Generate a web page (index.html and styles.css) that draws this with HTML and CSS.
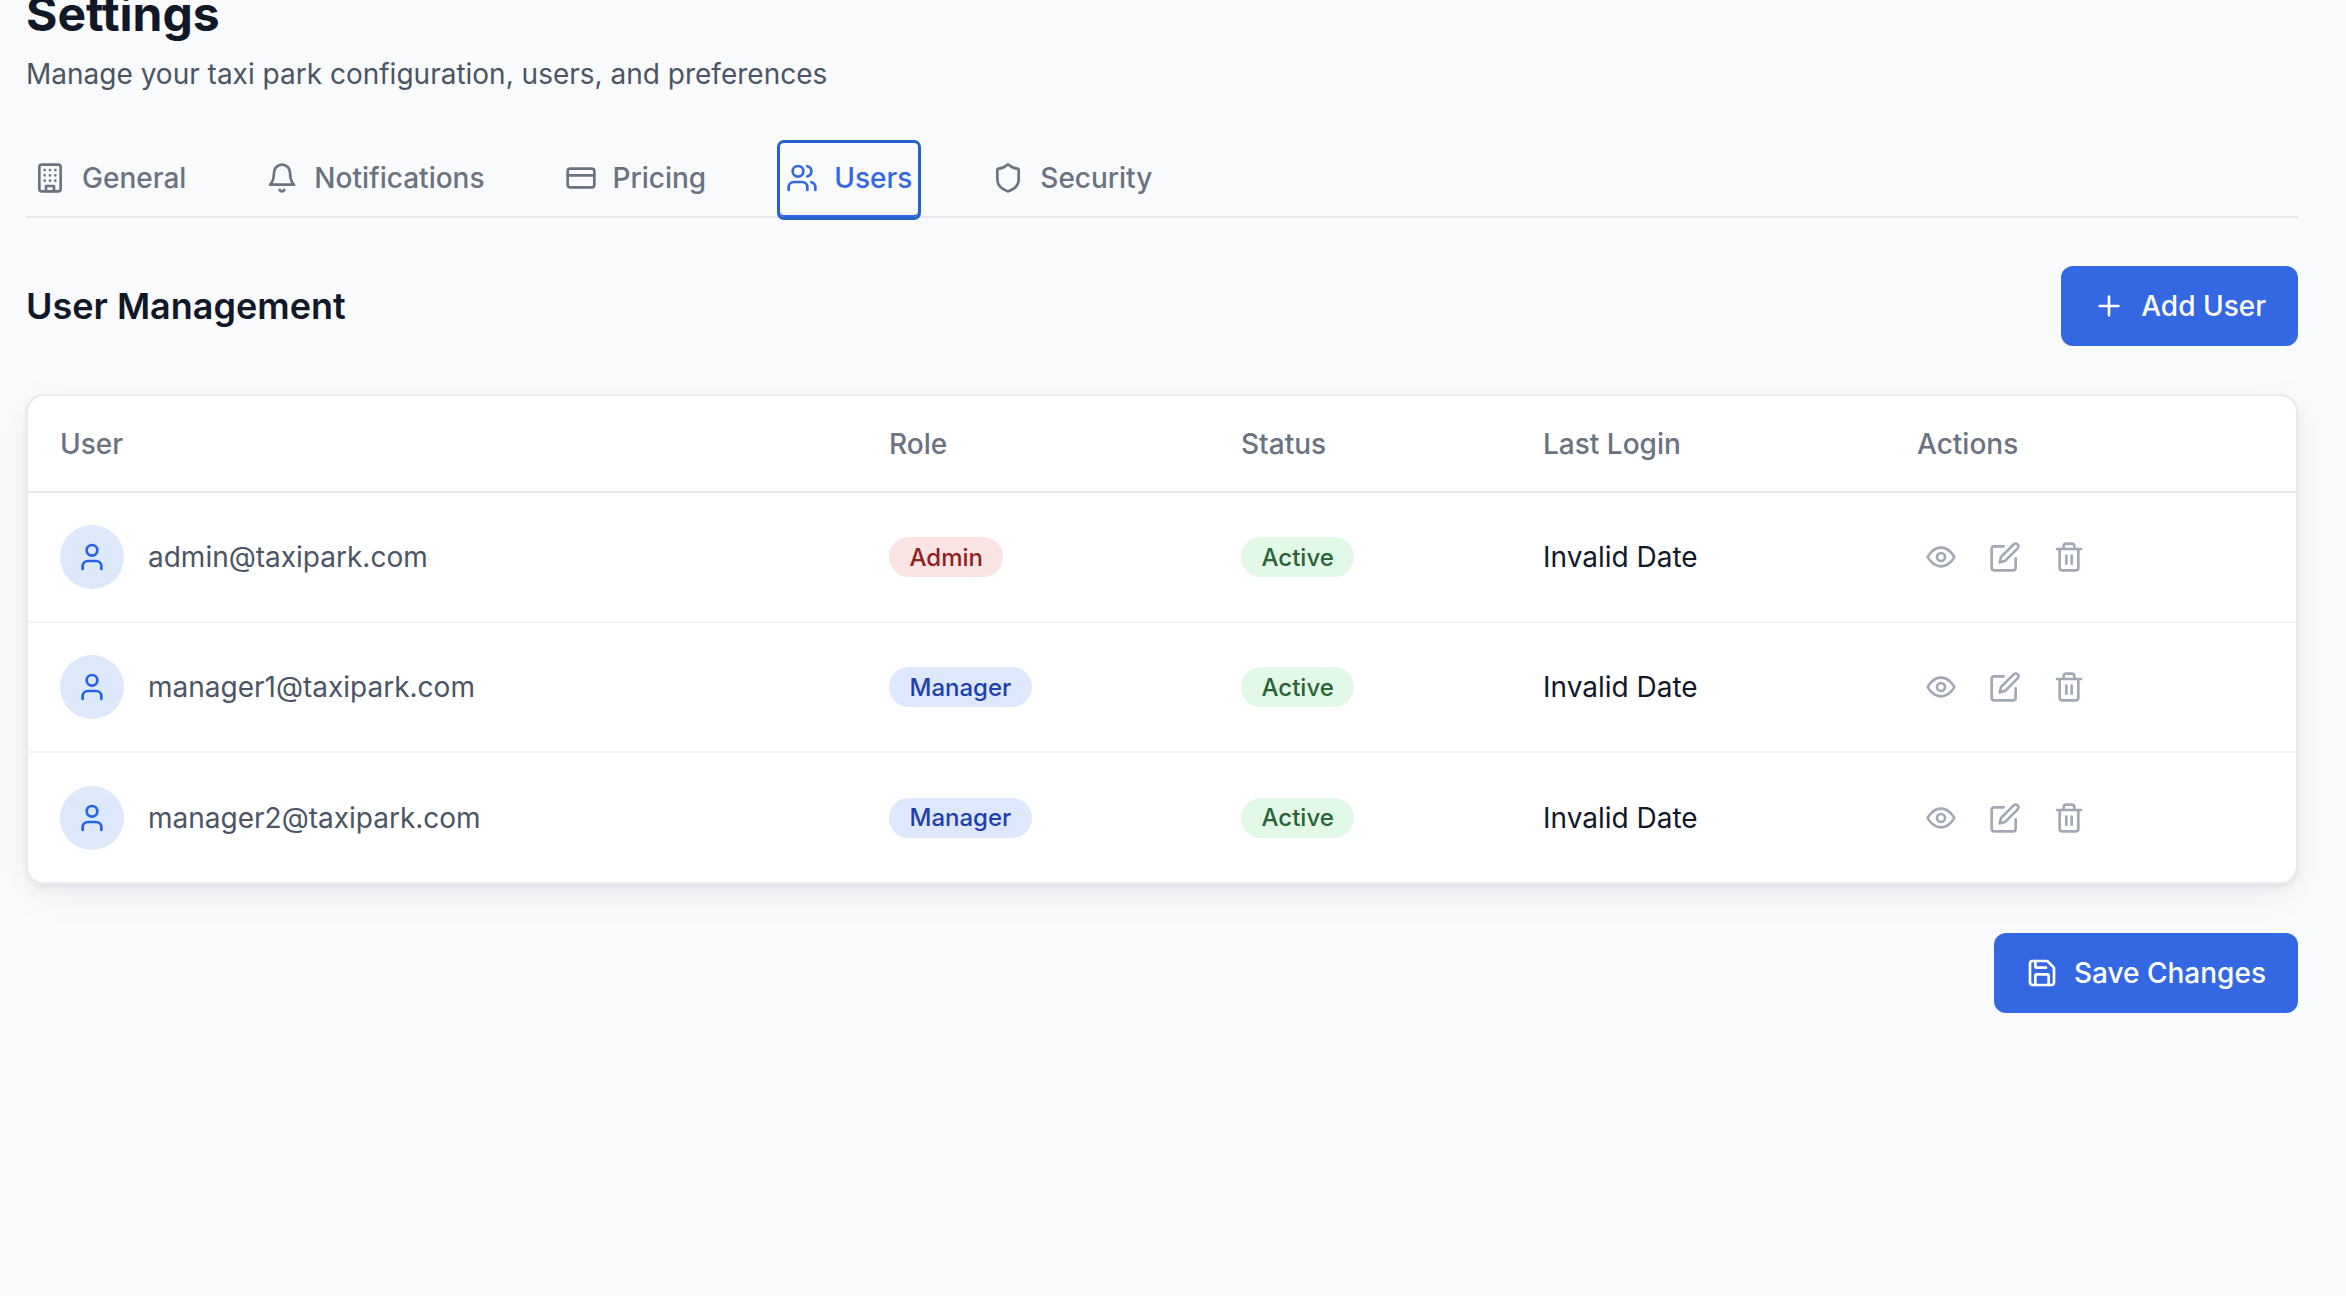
FILE: index.html
```html
<!DOCTYPE html>
<html lang="en">
<head>
<meta charset="utf-8">
<title>Settings</title>
<link rel="stylesheet" href="styles.css">
</head>
<body>
<main class="page">
  <header class="page-head">
    <h1 class="title">Settings</h1>
    <p class="subtitle">Manage your taxi park configuration, users, and preferences</p>
  </header>
  <nav class="tabs">
    <a class="tab"><svg class="icon" viewBox="0 0 24 24"><rect x="4" y="2" width="16" height="20" rx="2"/><path d="M9 22v-4h6v4M8 6h.01M16 6h.01M12 6h.01M12 10h.01M12 14h.01M16 10h.01M16 14h.01M8 10h.01M8 14h.01"/></svg>General</a>
    <a class="tab"><svg class="icon" viewBox="0 0 24 24"><path d="M6 8a6 6 0 0 1 12 0c0 7 3 9 3 9H3s3-2 3-9"/><path d="M10.3 21a1.94 1.94 0 0 0 3.4 0"/></svg>Notifications</a>
    <a class="tab"><svg class="icon" viewBox="0 0 24 24"><rect x="2" y="5" width="20" height="14" rx="2"/><path d="M2 10h20"/></svg>Pricing</a>
    <a class="tab tab-active"><svg class="icon" viewBox="0 0 24 24"><path d="M16 21v-2a4 4 0 0 0-4-4H6a4 4 0 0 0-4 4v2"/><circle cx="9" cy="7" r="4"/><path d="M22 21v-2a4 4 0 0 0-3-3.87M16 3.13a4 4 0 0 1 0 7.75"/></svg>Users</a>
    <a class="tab"><svg class="icon" viewBox="0 0 24 24"><path d="M20 13c0 5-3.5 7.5-7.66 8.95a1 1 0 0 1-.67-.01C7.5 20.5 4 18 4 13V6a1 1 0 0 1 1-1c2 0 4.5-1.2 6.24-2.72a1.17 1.17 0 0 1 1.52 0C14.51 3.81 17 5 19 5a1 1 0 0 1 1 1z"/></svg>Security</a>
  </nav>

  <section class="section-head">
    <h2 class="section-title">User Management</h2>
    <button class="btn"><svg class="icon" viewBox="0 0 24 24"><path d="M5 12h14M12 5v14"/></svg>Add User</button>
  </section>

  <div class="card">
    <table class="users">
      <colgroup>
        <col class="col-user"><col class="col-role"><col class="col-status"><col class="col-login"><col>
      </colgroup>
      <thead>
        <tr><th>User</th><th>Role</th><th>Status</th><th>Last Login</th><th>Actions</th></tr>
      </thead>
      <tbody>
        <tr>
          <td><div class="who"><span class="avatar"><svg class="icon" viewBox="0 0 24 24"><path d="M19 21v-2a4 4 0 0 0-4-4H9a4 4 0 0 0-4 4v2"/><circle cx="12" cy="7" r="4"/></svg></span>admin@taxipark.com</div></td>
          <td><span class="badge badge-admin">Admin</span></td>
          <td><span class="badge badge-active">Active</span></td>
          <td class="login">Invalid Date</td>
          <td><div class="actions">
            <button class="act"><svg class="icon" viewBox="0 0 24 24"><path d="M2 12s3.5-7 10-7 10 7 10 7-3.5 7-10 7-10-7-10-7"/><circle cx="12" cy="12" r="3"/></svg></button>
            <button class="act"><svg class="icon" viewBox="0 0 24 24"><path d="M11 4H4a2 2 0 0 0-2 2v14a2 2 0 0 0 2 2h14a2 2 0 0 0 2-2v-7"/><path d="M18.5 2.5a2.12 2.12 0 0 1 3 3L12 15l-4 1 1-4z"/></svg></button>
            <button class="act"><svg class="icon" viewBox="0 0 24 24"><path d="M3 6h18M19 6v14a2 2 0 0 1-2 2H7a2 2 0 0 1-2-2V6M8 6V4a2 2 0 0 1 2-2h4a2 2 0 0 1 2 2v2M10 11v6M14 11v6"/></svg></button>
          </div></td>
        </tr>
        <tr>
          <td><div class="who"><span class="avatar"><svg class="icon" viewBox="0 0 24 24"><path d="M19 21v-2a4 4 0 0 0-4-4H9a4 4 0 0 0-4 4v2"/><circle cx="12" cy="7" r="4"/></svg></span>manager1@taxipark.com</div></td>
          <td><span class="badge badge-manager">Manager</span></td>
          <td><span class="badge badge-active">Active</span></td>
          <td class="login">Invalid Date</td>
          <td><div class="actions">
            <button class="act"><svg class="icon" viewBox="0 0 24 24"><path d="M2 12s3.5-7 10-7 10 7 10 7-3.5 7-10 7-10-7-10-7"/><circle cx="12" cy="12" r="3"/></svg></button>
            <button class="act"><svg class="icon" viewBox="0 0 24 24"><path d="M11 4H4a2 2 0 0 0-2 2v14a2 2 0 0 0 2 2h14a2 2 0 0 0 2-2v-7"/><path d="M18.5 2.5a2.12 2.12 0 0 1 3 3L12 15l-4 1 1-4z"/></svg></button>
            <button class="act"><svg class="icon" viewBox="0 0 24 24"><path d="M3 6h18M19 6v14a2 2 0 0 1-2 2H7a2 2 0 0 1-2-2V6M8 6V4a2 2 0 0 1 2-2h4a2 2 0 0 1 2 2v2M10 11v6M14 11v6"/></svg></button>
          </div></td>
        </tr>
        <tr>
          <td><div class="who"><span class="avatar"><svg class="icon" viewBox="0 0 24 24"><path d="M19 21v-2a4 4 0 0 0-4-4H9a4 4 0 0 0-4 4v2"/><circle cx="12" cy="7" r="4"/></svg></span>manager2@taxipark.com</div></td>
          <td><span class="badge badge-manager">Manager</span></td>
          <td><span class="badge badge-active">Active</span></td>
          <td class="login">Invalid Date</td>
          <td><div class="actions">
            <button class="act"><svg class="icon" viewBox="0 0 24 24"><path d="M2 12s3.5-7 10-7 10 7 10 7-3.5 7-10 7-10-7-10-7"/><circle cx="12" cy="12" r="3"/></svg></button>
            <button class="act"><svg class="icon" viewBox="0 0 24 24"><path d="M11 4H4a2 2 0 0 0-2 2v14a2 2 0 0 0 2 2h14a2 2 0 0 0 2-2v-7"/><path d="M18.5 2.5a2.12 2.12 0 0 1 3 3L12 15l-4 1 1-4z"/></svg></button>
            <button class="act"><svg class="icon" viewBox="0 0 24 24"><path d="M3 6h18M19 6v14a2 2 0 0 1-2 2H7a2 2 0 0 1-2-2V6M8 6V4a2 2 0 0 1 2-2h4a2 2 0 0 1 2 2v2M10 11v6M14 11v6"/></svg></button>
          </div></td>
        </tr>
      </tbody>
    </table>
  </div>

  <footer class="foot">
    <button class="btn"><svg class="icon" viewBox="0 0 24 24"><path d="M15.2 3a2 2 0 0 1 1.4.6l3.8 3.8a2 2 0 0 1 .6 1.4V19a2 2 0 0 1-2 2H5a2 2 0 0 1-2-2V5a2 2 0 0 1 2-2z"/><path d="M17 21v-7a1 1 0 0 0-1-1H8a1 1 0 0 0-1 1v7M7 3v4a1 1 0 0 0 1 1h7"/></svg>Save Changes</button>
  </footer>
</main>
</body>
</html>
```

FILE: styles.css
```css
* { box-sizing: border-box; }
html, body { margin: 0; height: 100%; overflow: hidden; }
body {
  background: #f9fafc;
  color: #111827;
  font-family: Inter, "Liberation Sans", sans-serif;
}
.page { padding: 0 48px 0 26px; margin-top: -13px; }
.title { margin: 0; font-size: 48px; line-height: 54px; font-weight: 700; color: #111827; }
.subtitle { margin: 14px 0 0; font-size: 28px; line-height: 38px; color: #4b5563; }

.icon {
  width: 32px; height: 32px; flex: none;
  fill: none; stroke: currentColor; stroke-width: 2;
  stroke-linecap: round; stroke-linejoin: round;
}

.tabs {
  display: flex; gap: 64px; margin-top: 47px;
  border-bottom: 2px solid #e5e7eb;
  height: 78px;
}
.tab {
  display: flex; align-items: center; gap: 16px;
  height: 80px; padding: 0 5px 4px;
  border: 3px solid transparent; border-radius: 7px;
  font-size: 28px; font-weight: 500; color: #6b7280;
}
.tab-active {
  margin: 0 -1px; padding: 0 6px 4px;
  border-color: #2563c9; color: #3468e3;
  box-shadow: inset 0 -2px 0 #3468e3;
}

.section-head {
  display: flex; justify-content: space-between; align-items: center;
  margin-top: 48px;
}
.section-title { margin: 0; font-size: 36px; line-height: 44px; font-weight: 600; color: #111827; }
.btn {
  display: flex; align-items: center; gap: 16px;
  height: 80px; padding: 0 32px;
  border: 0; border-radius: 12px;
  background: #3468e3; color: #fff;
  font: 500 28px Inter, "Liberation Sans", sans-serif;
}

.card {
  margin-top: 48px;
  background: #fff;
  border: 2px solid #e8eaee;
  border-bottom-color: #eceef1;
  border-radius: 18px;
  box-shadow: 0 4px 6px -1px rgba(17, 24, 39, .08), 0 10px 40px rgba(17, 24, 39, .06);
  overflow: hidden;
}
.users { width: 100%; border-collapse: collapse; table-layout: fixed; }
.col-user { width: 829px; }
.col-role { width: 352px; }
.col-status { width: 302px; }
.col-login { width: 374px; }
.users th {
  height: 96px; padding: 1px 0 0 32px; text-align: left;
  font-size: 28px; font-weight: 500; color: #6b7280;
  border-bottom: 2px solid #e5e7eb;
}
.users td {
  height: 130px; padding: 0 0 0 32px;
  font-size: 28px; color: #4b5563;
  border-bottom: 2px solid #f3f4f6;
}
.users tr:last-child td { border-bottom: 0; }
.who { display: flex; align-items: center; gap: 24px; }
.avatar {
  width: 64px; height: 64px; border-radius: 50%;
  display: flex; align-items: center; justify-content: center;
  background: #dde8fb; color: #2563eb;
}
.users .login { color: #111827; }
.badge {
  display: inline-flex; align-items: center; height: 40px; padding: 0 20.5px;
  border-radius: 20px; font-size: 24px; font-weight: 500;
}
.badge-admin { background: #fae3e3; color: #8f2020; }
.badge-manager { background: #dde8fc; color: #1e40af; }
.badge-active { background: #e2f9e8; color: #2a6336; }
.actions { display: flex; gap: 16px; }
.act {
  display: flex; align-items: center; justify-content: center;
  width: 48px; height: 48px; padding: 0;
  border: 0; background: none; color: #a2a8b4;
}
.foot { display: flex; justify-content: flex-end; margin-top: 49px; }
```
